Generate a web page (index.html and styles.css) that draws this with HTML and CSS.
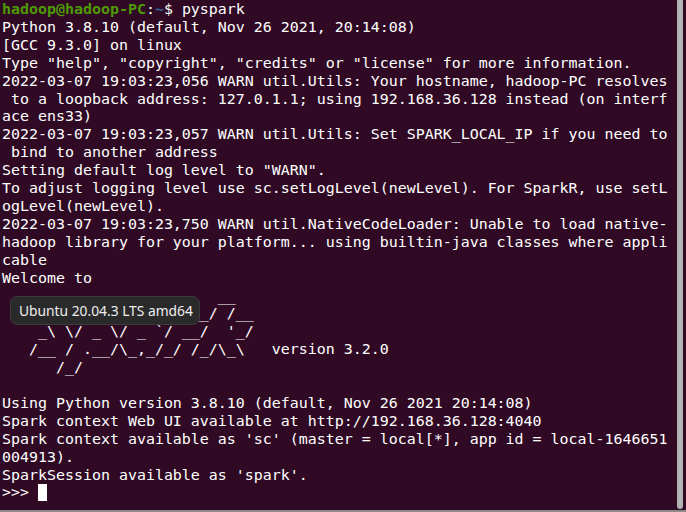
FILE: index.html
```html
<!DOCTYPE html>
<html>
<head>
<meta charset="utf-8">
<link rel="stylesheet" href="styles.css">
</head>
<body>
<div class="window">
  <div class="main">
    <pre class="term"><span class="user">hadoop@hadoop-PC</span>:<span class="path">~</span>$ pyspark
Python 3.8.10 (default, Nov 26 2021, 20:14:08) 
[GCC 9.3.0] on linux
Type "help", "copyright", "credits" or "license" for more information.
2022-03-07 19:03:23,056 WARN util.Utils: Your hostname, hadoop-PC resolves
 to a loopback address: 127.0.1.1; using 192.168.36.128 instead (on interf
ace ens33)
2022-03-07 19:03:23,057 WARN util.Utils: Set SPARK_LOCAL_IP if you need to
 bind to another address
Setting default log level to "WARN".
To adjust logging level use sc.setLogLevel(newLevel). For SparkR, use setL
ogLevel(newLevel).
2022-03-07 19:03:23,750 WARN util.NativeCodeLoader: Unable to load native-
hadoop library for your platform... using builtin-java classes where appli
cable
Welcome to
      ____              __
     / __/__  ___ _____/ /__
    _\ \/ _ \/ _ `/ __/  '_/
   /__ / .__/\_,_/_/ /_/\_\   version 3.2.0
      /_/

Using Python version 3.8.10 (default, Nov 26 2021 20:14:08)
Spark context Web UI available at http://192.168.36.128:4040
Spark context available as 'sc' (master = local[*], app id = local-1646651
004913).
SparkSession available as 'spark'.
&gt;&gt;&gt; <span class="cursor"></span></pre>
    <div class="track"><div class="thumb"></div></div>
  </div>
  <div class="bottom"></div>
  <div class="tooltip">Ubuntu 20.04.3 LTS amd64</div>
</div>
</body>
</html>
```
FILE: styles.css
```css
html, body {
  margin: 0;
  padding: 0;
  background: #300a24;
}
.window {
  position: relative;
  width: 686px;
  height: 512px;
  display: flex;
  flex-direction: column;
  overflow: hidden;
}
.main {
  flex: 1;
  display: flex;
  min-height: 0;
}
.term {
  flex: 1;
  margin: 0;
  padding: 1px 0 0 2px;
  font-family: "DejaVu Sans Mono", monospace;
  font-size: 14.95px;
  line-height: 17.9px;
  color: #ffffff;
  white-space: pre;
  overflow: hidden;
}
.user {
  color: #4e9a06;
  font-weight: bold;
}
.path {
  color: #3465a4;
  font-weight: bold;
}
.cursor {
  display: inline-block;
  width: 9px;
  height: 17px;
  background: #ffffff;
  vertical-align: -4px;
}
.track {
  width: 9px;
  padding-right: 3px;
  box-sizing: border-box;
  display: flex;
}
.thumb {
  flex: 1;
  background: #b3b3b3;
  border-radius: 0 0 3px 3px;
  margin-bottom: 1px;
}
.bottom {
  height: 2px;
  background: #8e8a8c;
}
.tooltip {
  position: absolute;
  left: 10px;
  top: 296px;
  width: 190px;
  height: 29px;
  padding: 0 0 0 8px;
  box-sizing: border-box;
  display: flex;
  align-items: center;
  background: #2b2a2b;
  border: 1px solid #3d3a3c;
  border-radius: 7px;
  color: #eeeeee;
  font-family: "Noto Sans", sans-serif;
  font-size: 13.8px;
  white-space: nowrap;
}
```
